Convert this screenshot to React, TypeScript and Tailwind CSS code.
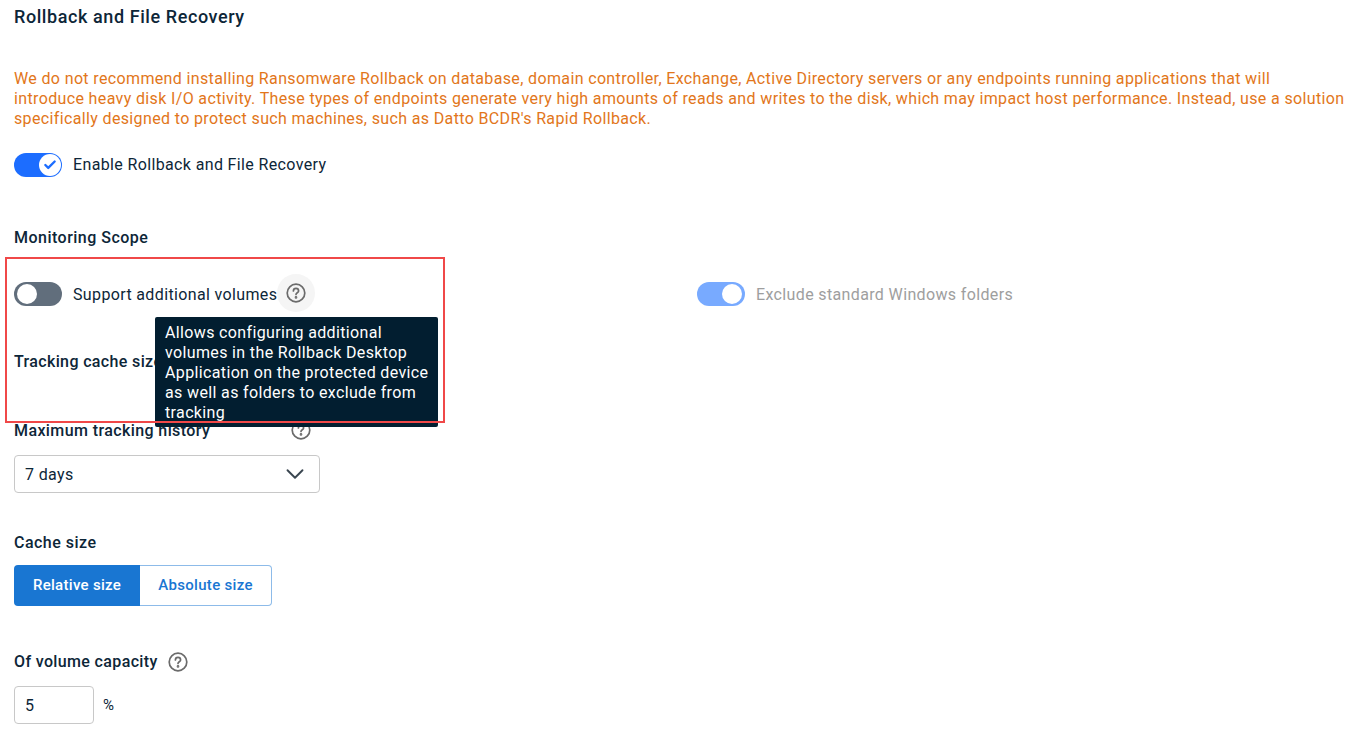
import { Check, ChevronDown } from "lucide-react";

const HelpIcon = ({ color = "#6b6b6b" }: { color?: string }) => (
  <svg width="20" height="20" viewBox="0 0 20 20" fill="none" stroke={color} strokeWidth="1.7" strokeLinecap="round">
    <circle cx="10" cy="10" r="8.8" />
    <path d="M7.4 7.9a2.6 2.6 0 0 1 5.2 0c0 1.7-2.6 1.9-2.6 3.5" />
    <circle cx="10" cy="14.4" r="0.5" fill={color} />
  </svg>
);

const Toggle = ({ on, check, dim }: { on: boolean; check?: boolean; dim?: boolean }) => (
  <div
    className={`w-12 h-6 rounded-full flex items-center shrink-0 ${check ? "px-[1px]" : "px-[3px]"} ${
      on ? "justify-end" : "justify-start"
    } ${on ? (dim ? "bg-[#78aaff]" : "bg-[#1c6dff]") : "bg-[#616e7c]"}`}
  >
    <div className={`rounded-full bg-white flex items-center justify-center ${check ? "w-[22px] h-[22px]" : "w-[20px] h-[20px]"}`}>
      {check && <Check className="w-[14px] h-[14px] text-[#1c6dff]" strokeWidth={4} />}
    </div>
  </div>
);

export default function App() {
  return (
    <div className="relative h-[737px] overflow-hidden bg-white px-[14px] text-[16px] leading-5 tracking-[0.36px] text-[#0d2638] font-['Roboto',sans-serif]">
      <h2 className="pt-[7px] font-medium text-[18px] tracking-[0.58px]">Rollback and File Recovery</h2>

      <p className="mt-[41px] pt-[1px] text-[#e2761a]">
        We do not recommend installing Ransomware Rollback on database, domain controller, Exchange, Active Directory servers or any endpoints running applications that will
        <br />
        introduce heavy disk I/O activity. These types of endpoints generate very high amounts of reads and writes to the disk, which may impact host performance. Instead, use a solution
        <br />
        specifically designed to protect such machines, such as Datto BCDR's Rapid Rollback.
      </p>

      <div className="mt-[24px] flex items-center gap-[11px]">
        <Toggle on check />
        <span>Enable Rollback and File Recovery</span>
      </div>

      <h3 className="mt-[51px] font-medium tracking-[0.48px]">Monitoring Scope</h3>

      <div className="mt-[34px] flex items-center h-6">
        <div className="relative flex items-center gap-[11px] w-[683px]">
          <Toggle on={false} />
          <span className="pt-[1px]">Support additional volumes</span>
          <div className="absolute left-[263px] top-[-8px] w-[38px] h-[38px] rounded-full bg-[#f5f5f5] flex items-center justify-center">
            <HelpIcon />
          </div>
          <div className="absolute z-10 left-[141px] top-[35px] w-[283px] h-[110px] rounded-[2px] bg-[#021e30] text-white pl-[10px] pr-[8px] pt-[6px]">
            Allows configuring additional volumes in the Rollback Desktop Application on the protected device as well as folders to exclude from tracking
          </div>
        </div>
        <div className="flex items-center gap-[11px]">
          <Toggle on dim />
          <span className="pt-[1px] text-[#9e9e9e]">Exclude standard Windows folders</span>
        </div>
      </div>

      <h3 className="mt-[46px] font-medium">Tracking cache size</h3>

      <div className="mt-[49px] flex items-center justify-between w-[297px]">
        <span className="font-medium tracking-[0.4px]">Maximum tracking history</span>
        <div className="-translate-y-[1px]">
          <HelpIcon />
        </div>
      </div>

      <div className="mt-[14px] w-[306px] h-[38px] rounded-[4px] border border-[#c8c8c8] flex items-center justify-between pl-[10px] pr-[9px]">
        <span className="pt-[1px]">7 days</span>
        <ChevronDown className="w-[30px] h-[30px] text-[#3a4650]" strokeWidth={1.5} />
      </div>

      <h3 className="mt-[40px] font-medium tracking-[0.48px]">Cache size</h3>

      <div className="mt-[12px] flex w-[258px] h-[41px] text-[15px] font-medium tracking-[0.3px]">
        <div className="w-[126px] rounded-l-[4px] bg-[#1976d2] text-white flex items-center justify-center pb-[1px]">Relative size</div>
        <div className="flex-1 rounded-r-[4px] border border-l-0 border-[#8dbbe9] text-[#1976d2] flex items-center justify-center pb-[1px]">Absolute size</div>
      </div>

      <div className="mt-[46px] flex items-center gap-[10px]">
        <span className="font-medium">Of volume capacity</span>
        <HelpIcon />
      </div>

      <div className="mt-[14px] flex items-center gap-[9px]">
        <div className="w-20 h-[38px] rounded-[4px] border border-[#c8c8c8] flex items-center pl-[10px] pt-[1px]">5</div>
        <span className="text-[15px]">%</span>
      </div>

      <div className="absolute left-[5px] top-[257px] w-[440px] h-[166px] border-2 border-[#f04848] z-20 pointer-events-none" />
    </div>
  );
}
